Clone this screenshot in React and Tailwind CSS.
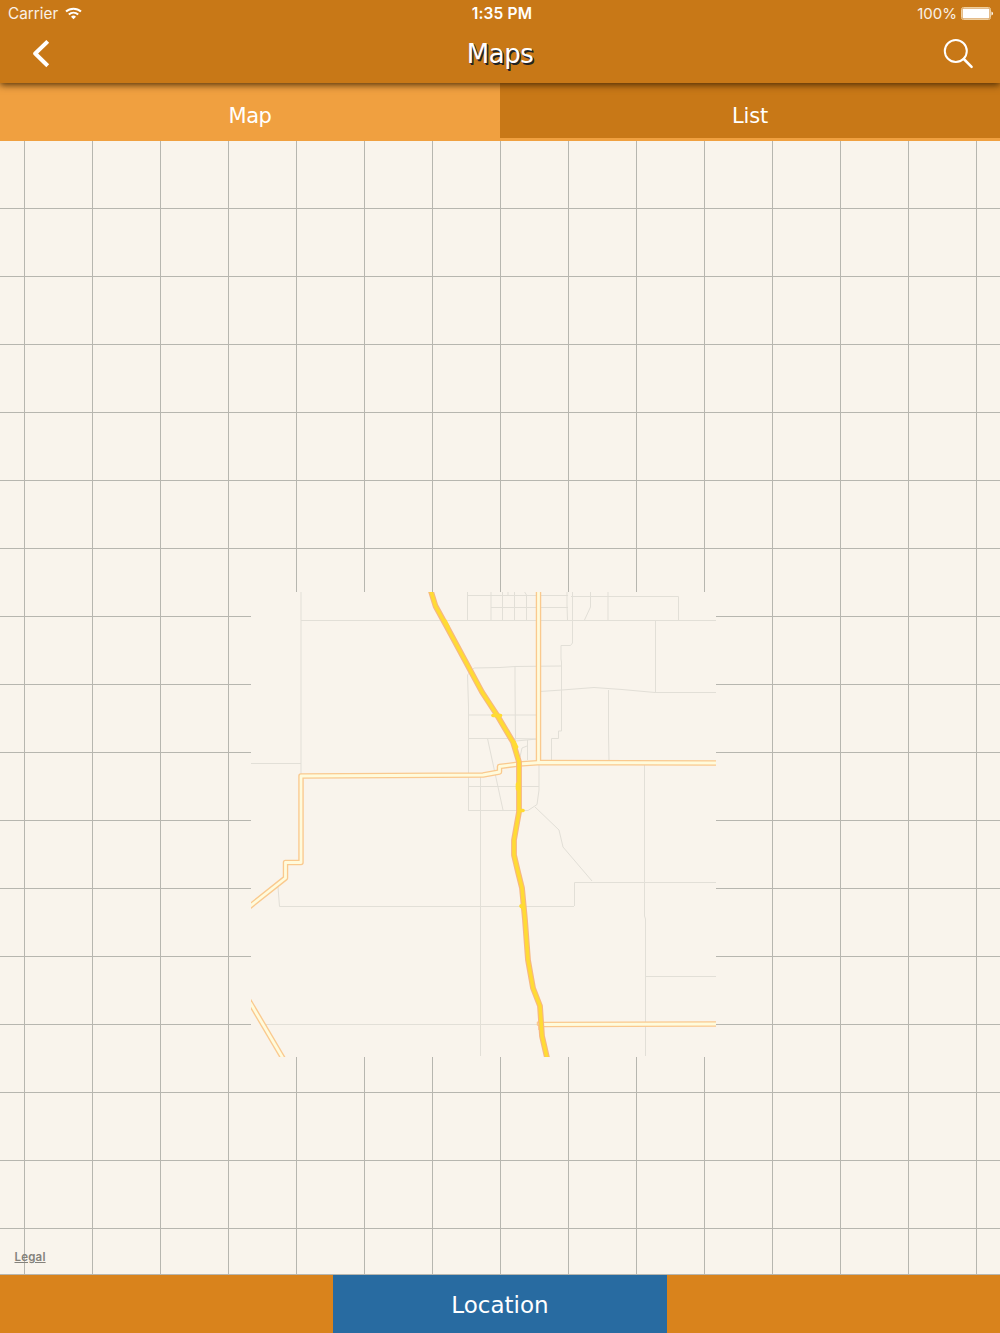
const columns = Array.from({ length: 15 }, (_, i) => 24.5 + i * 68);
const rows = Array.from({ length: 16 }, (_, i) => 208.5 + i * 68);

const streets = [
  "M301 591V775",
  "M301 620.5H716",
  "M251 763.5H301",
  "M467.5 591V620M467 595.5H568M491 607.5H568",
  "M491 591V620M502.5 591V620M508 591V596M514.5 591V620M524 591L526.5 595V620",
  "M567 591V605L567.5 620",
  "M572.5 591V643L570.5 645.5H561V659L561.5 662V731H558.5V738.5H551.5V761",
  "M590.5 591V607L584.5 620M608 591V620",
  "M571 596.5H678.5V620",
  "M655.5 620V692.5",
  "M540 691.5L562 690L594 687.5L622 689.5L655 692.5H716",
  "M608.5 690V735L609 761",
  "M468.5 810V706L467.5 675L474 668L500 667.5L515 666.5L561 666",
  "M515 667V684L515.5 740",
  "M468 715H537M468 738.5H512L537 739",
  "M487.5 738.5L503 810",
  "M468 786.5H539M468 810.5H528L537 804.5L539 790V762",
  "M480.5 776V1056",
  "M516 741L537 739M527.5 740V760M527 746L522 748L520 757",
  "M535 807L559 830L563 847L592 881",
  "M574.5 906V882.5H716",
  "M278 887L279.5 906.5H574",
  "M644.5 764V916L645.5 919V1056",
  "M645 976.5H716",
  "M266 1024.5H540",
];

const highways = [
  "M538.5 588V763",
  "M249 907L285.5 878V862.5H301V776L483 775L499.5 772V766.5L519 764L541 762.5L718 763",
  "M248 999L284 1060",
  "M541 1024.5L718 1024",
];

const interstate =
  "M430 588L431.5 593L435.5 606L447 627L482 692L497 715L513 742L519 762V812L514 840V855L518 872L522 888L525 920L528 960L533 988L540 1006L542 1036L548 1062";

const ramps = [
  "M445 621L448 627",
  "M493 715.5H500.5",
  "M514 742L516.5 747",
  "M517.5 784V789",
  "M520 810.5H523",
  "M521 906L524 909",
];

function Wifi() {
  return (
    <svg className="-mt-px h-[13px] w-[17px]" viewBox="0 0 17 13" fill="none" stroke="white" strokeWidth="2">
      <path d="M1 4.6C5.2.7 11.8.7 16 4.6" />
      <path d="M3.8 7.5C6.5 5.1 10.5 5.1 13.2 7.5" />
      <path d="M6 9.7Q8.5 7.5 11 9.7L8.5 12.3Z" fill="white" stroke="none" />
    </svg>
  );
}

function Header() {
  return (
    <header className="relative z-10 h-[83px] bg-[#c87817] text-white shadow-[0_2px_7px_rgba(55,30,0,0.85)]">
      <div className="grid h-7 grid-cols-3 items-center pl-2 pr-[7px] font-[Inter,sans-serif] text-[15.5px] leading-7">
        <div className="flex items-center gap-[7px] text-[15.3px] text-white/90">
          <span>Carrier</span>
          <Wifi />
        </div>
        <span className="pl-[3px] text-center font-semibold tracking-[0.15px]">1:35 PM</span>
        <div className="flex items-center justify-end gap-1 text-[15px] text-white/90">
          <span>100%</span>
          <svg className="-mt-px h-[13px] w-8" viewBox="0 0 32 13">
            <rect x=".5" y=".5" width="29" height="12" rx="2" fill="none" stroke="#efcf9f" />
            <rect x="1.5" y="1.5" width="27" height="10" rx="1" fill="white" />
            <path d="M30.5 4.5Q32 4.8 32 6.5T30.5 8.5Z" fill="white" />
          </svg>
        </div>
      </div>
      <div className="grid h-[52px] grid-cols-3 items-center">
        <svg className="ml-8 h-7 w-[18px]" viewBox="0 0 18 28" fill="none" stroke="white" strokeWidth="4">
          <path d="M14.3 2.8L3.2 13.5L14.3 24.4" strokeLinejoin="round" strokeLinecap="square" />
        </svg>
        <h1 className="text-center font-['DejaVu_Sans',sans-serif] text-[26px] tracking-[-0.5px] [text-shadow:1px_1px_0_#222,1.5px_1.5px_0_#222]">Maps</h1>
        <svg className="ml-auto mr-[26px] h-8 w-8" viewBox="0 0 32 32" fill="none" stroke="white" strokeWidth="2" strokeLinecap="round">
          <circle cx="13.8" cy="13" r="11" />
          <path d="M21.8 21L29.6 28.8" strokeWidth="2.5" />
        </svg>
      </div>
    </header>
  );
}

function RoadMap() {
  return (
    <svg className="block h-full w-full" viewBox="0 141 1000 1134" fill="none">
      <defs>
        <clipPath id="tile">
          <rect x="251" y="592" width="465" height="465" />
        </clipPath>
      </defs>
      <g stroke="#b7b6af">
        {columns.map((x) => (
          <path key={x} d={`M${x} 141V1275`} />
        ))}
        {rows.map((y) => (
          <path key={y} d={`M0 ${y}H1000`} />
        ))}
        <path d="M0 1274.5H1000" />
      </g>
      <g clipPath="url(#tile)">
        <rect x="251" y="592" width="465" height="465" fill="#f9f4ec" />
        <g stroke="#e2dfd7">
          {streets.map((d) => (
            <path key={d} d={d} />
          ))}
        </g>
        <g stroke="#fac98e" strokeWidth="5.5" strokeLinejoin="round">
          {highways.map((d) => (
            <path key={d} d={d} />
          ))}
          <path d="M540 1021L537.5 1022.5V1025L539 1026V1030" strokeWidth="1.5" />
        </g>
        <g stroke="#fffbdc" strokeWidth="2.8" strokeLinejoin="round">
          {highways.map((d) => (
            <path key={d} d={d} />
          ))}
        </g>
        <path d={interstate} stroke="#f6b783" strokeWidth="5.8" strokeLinejoin="round" />
        <g stroke="#ffdb34" strokeWidth="3.6" strokeLinejoin="round" strokeLinecap="round">
          <path d={interstate} />
          {ramps.map((d) => (
            <path key={d} d={d} />
          ))}
        </g>
      </g>
    </svg>
  );
}

export default function App() {
  return (
    <div className="flex h-[1333px] w-[1000px] flex-col overflow-hidden bg-[#f9f4ec] font-['DejaVu_Sans',sans-serif] text-white">
      <Header />
      <nav className="grid h-[58px] grid-cols-2 bg-[#f0a040] text-[21px] tracking-[-0.4px]">
        <button className="pt-[9px]">Map</button>
        <button className="mb-[3px] bg-[#c87817] pt-3 tracking-[-0.2px]">List</button>
      </nav>
      <main className="relative h-[1134px]">
        <RoadMap />
        <a className="absolute bottom-[10px] left-[14.5px] font-[Inter,sans-serif] text-[11.5px] font-semibold leading-4 tracking-[0.2px] text-[#84817b] underline">Legal</a>
      </main>
      <footer className="grid h-[58px] grid-cols-3 bg-[#d9831c] text-[23px]">
        <div />
        <button className="bg-[#286ba1] pt-0.5">Location</button>
        <div />
      </footer>
    </div>
  );
}
